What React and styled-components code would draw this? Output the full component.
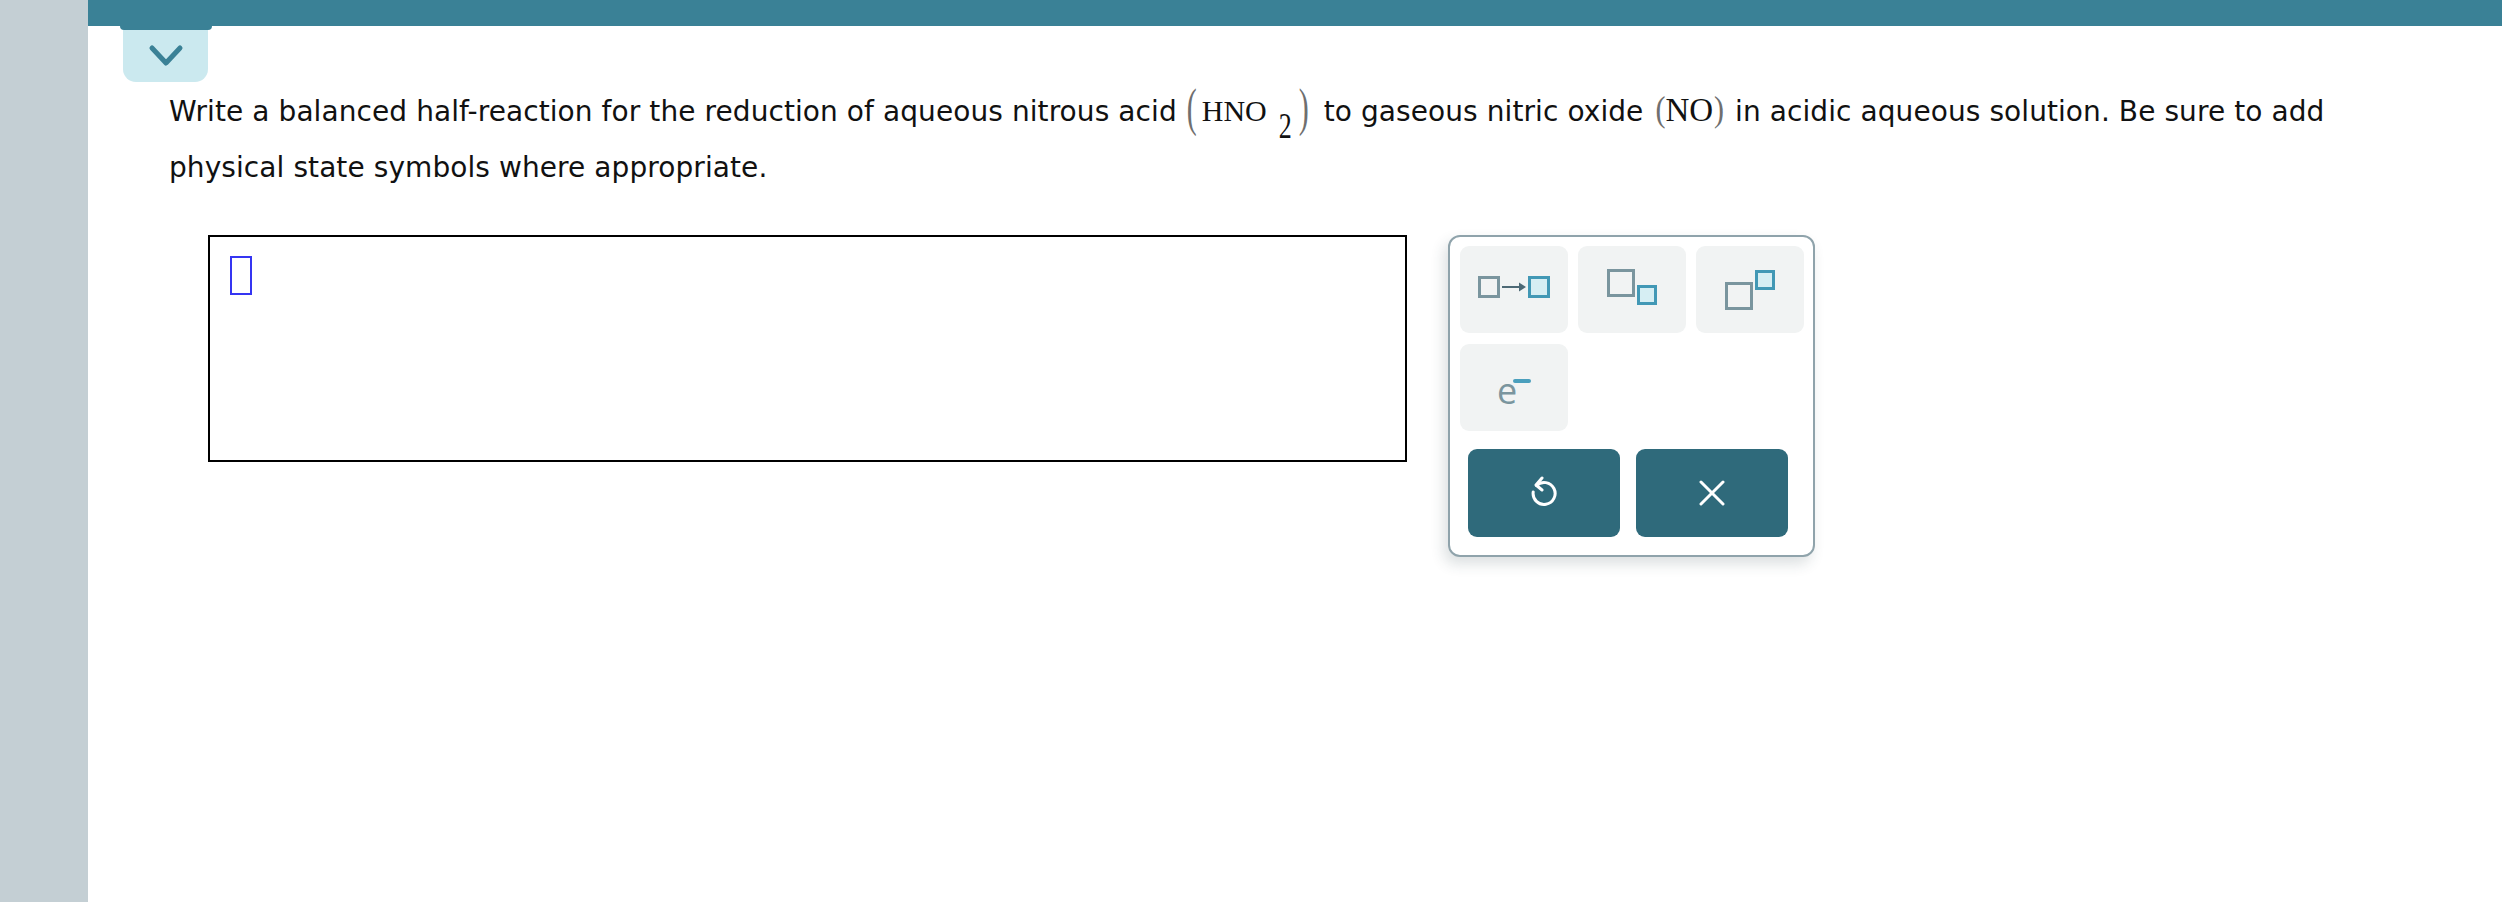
import React from 'react';
import styled, { createGlobalStyle } from 'styled-components';

const GlobalStyle = createGlobalStyle`
  html, body {
    margin: 0;
    padding: 0;
    background: #fff;
  }
  #root {
    height: 902px;
  }
`;

const Page = styled.div`
  display: flex;
  height: 902px;
  width: 2502px;
  overflow: hidden;
`;

const Sidebar = styled.div`
  flex: 0 0 88px;
  background: #c4cfd4;
`;

const Main = styled.div`
  flex: 1;
  display: flex;
  flex-direction: column;
`;

const TopBar = styled.div`
  height: 26px;
  background: #3a8196;
`;

const TabWrap = styled.div`
  width: 92px;
  margin-left: 32px;
  display: flex;
  flex-direction: column;
`;

const Lip = styled.div`
  height: 4px;
  background: #3a8196;
  border-radius: 0 0 5px 5px;
`;

const Tab = styled.div`
  width: 85px;
  height: 52px;
  margin-left: 3px;
  background: #cbe9ef;
  border-radius: 0 0 13px 13px;
  display: flex;
  align-items: center;
  justify-content: center;
`;

const Question = styled.p`
  margin: 2px 0 0 81px;
  max-width: 2230px;
  font-family: 'DejaVu Sans', Verdana, sans-serif;
  font-size: 28px;
  letter-spacing: 0.08px;
  line-height: 56px;
  color: #111;
`;

const Chem = styled.span`
  font-family: 'Liberation Serif', 'Times New Roman', serif;
  font-size: ${(p) => p.$size}px;
  letter-spacing: 0;
  color: #111;
  line-height: 0;
  white-space: nowrap;
  margin: 0 ${(p) => p.$right}px 0 ${(p) => p.$left}px;
`;

const Paren = styled.span`
  display: inline-block;
  font-family: 'Liberation Serif', serif;
  font-size: 30px;
  line-height: 0;
  color: #6f6f6f;
  transform: translateY(${(p) => p.$shift}px) scaleY(${(p) => p.$tall});
  margin: 0 ${(p) => p.$after || 0}px 0 ${(p) => p.$before || 0}px;
`;

const Sub = styled.span`
  display: inline-block;
  font-size: 26px;
  line-height: 0;
  margin-left: 12px;
  transform: translateY(14px) scaleY(1.35);
`;

const Workspace = styled.div`
  display: flex;
  align-items: flex-start;
  gap: 41px;
  margin: 39px 0 0 120px;
`;

const AnswerBox = styled.div`
  box-sizing: border-box;
  width: 1199px;
  height: 227px;
  border: 2px solid #000;
  padding: 19px 0 0 20px;
`;

const Cursor = styled.div`
  width: 22px;
  height: 39px;
  box-sizing: border-box;
  border: 2px solid #3535f2;
`;

const Palette = styled.div`
  width: 367px;
  height: 322px;
  box-sizing: border-box;
  border: 2px solid #8fa3ab;
  border-radius: 12px;
  background: #fff;
  box-shadow: -4px 7px 14px rgba(40, 60, 70, 0.16);
  padding: 9px 9px 17px 10px;
  display: flex;
  flex-direction: column;
`;

const KeyGrid = styled.div`
  display: grid;
  grid-template-columns: repeat(3, 108px);
  grid-auto-rows: 87px;
  column-gap: 10px;
  row-gap: 11px;
`;

const Key = styled.div`
  background: #f1f3f3;
  border-radius: 9px;
  display: flex;
  align-items: center;
  justify-content: center;
  padding-bottom: ${(p) => p.$lift || 0}px;
  box-sizing: border-box;
`;

const ActionRow = styled.div`
  display: flex;
  gap: 16px;
  margin: 18px 0 0 8px;
`;

const Action = styled.div`
  width: 152px;
  height: 88px;
  background: #2f6a7b;
  border-radius: 9px;
  display: flex;
  align-items: center;
  justify-content: center;
`;

const Electron = styled.span`
  position: relative;
  font-family: 'Open Sans', sans-serif;
  font-size: 36px;
  line-height: 1;
  color: #7a959e;
  padding-right: 14px;
  margin-top: 6px;
`;

const Minus = styled.span`
  position: absolute;
  right: 0;
  top: 6px;
  width: 18px;
  height: 4px;
  border-radius: 2px;
  background: #4a9fbd;
`;

const GRAY = '#7a959e';
const BLUE = '#4298b5';
const LIGHT = '#d6eef3';

const ArrowIcon = () => (
  <svg width="72" height="22" viewBox="0 0 72 22">
    <rect x="1.5" y="1.5" width="19" height="19" fill="none" stroke={GRAY} strokeWidth="3" />
    <line x1="24" y1="11" x2="43" y2="11" stroke="#4d6975" strokeWidth="2" />
    <polygon points="41,6.5 48,11 41,15.5" fill="#4d6975" />
    <rect x="51.5" y="1.5" width="19" height="19" fill={LIGHT} stroke={BLUE} strokeWidth="3" />
  </svg>
);

const SubIcon = () => (
  <svg width="50" height="36" viewBox="0 0 50 36">
    <rect x="1.5" y="1.5" width="25" height="25" fill="none" stroke={GRAY} strokeWidth="3" />
    <rect x="31.5" y="17.5" width="17" height="17" fill={LIGHT} stroke={BLUE} strokeWidth="3" />
  </svg>
);

const SupIcon = () => (
  <svg width="50" height="40" viewBox="0 0 50 40">
    <rect x="31.5" y="1.5" width="17" height="17" fill={LIGHT} stroke={BLUE} strokeWidth="3" />
    <rect x="1.5" y="13.5" width="25" height="25" fill="none" stroke={GRAY} strokeWidth="3" />
  </svg>
);

const UndoIcon = () => (
  <svg width="28" height="34" viewBox="0 0 28 34" fill="none" stroke="#fff" strokeWidth="3" strokeLinecap="round" strokeLinejoin="round">
    <path d="M12 2 L6 9 L12 14" />
    <path d="M6.5 9.5 A11 11 0 1 1 3.2 16" />
  </svg>
);

const CloseIcon = () => (
  <svg width="26" height="26" viewBox="0 0 26 26" stroke="#fff" strokeWidth="3" strokeLinecap="round">
    <line x1="2" y1="2" x2="24" y2="24" />
    <line x1="24" y1="2" x2="2" y2="24" />
  </svg>
);

const ChevronDown = () => (
  <svg width="36" height="24" viewBox="0 0 36 24" fill="none" stroke="#3a8196" strokeWidth="5" strokeLinecap="round" strokeLinejoin="round">
    <path d="M4 4 L18 19 L32 4" />
  </svg>
);

export default function App() {
  return (
    <>
      <GlobalStyle />
      <Page>
        <Sidebar />
        <Main>
          <TopBar />
          <TabWrap>
            <Lip />
            <Tab>
              <ChevronDown />
            </Tab>
          </TabWrap>
          <Question>
            Write a balanced half-reaction for the reduction of aqueous nitrous acid
            <Chem $size={30} $left={10} $right={15}>
              <Paren $tall={1.75} $shift={-4} $after={5}>(</Paren>HNO<Sub>2</Sub>
              <Paren $tall={1.75} $shift={-4} $before={7}>)</Paren>
            </Chem>
            to gaseous nitric oxide
            <Chem $size={33} $left={12} $right={11}>
              <Paren $tall={1.2} $shift={-2}>(</Paren>NO<Paren $tall={1.2} $shift={-2} $before={1}>)</Paren>
            </Chem>
            in acidic aqueous solution. Be sure to add physical state symbols where appropriate.
          </Question>
          <Workspace>
            <AnswerBox>
              <Cursor />
            </AnswerBox>
            <Palette>
              <KeyGrid>
                <Key $lift={6}><ArrowIcon /></Key>
                <Key $lift={6}><SubIcon /></Key>
                <Key><SupIcon /></Key>
                <Key>
                  <Electron>e<Minus /></Electron>
                </Key>
              </KeyGrid>
              <ActionRow>
                <Action><UndoIcon /></Action>
                <Action><CloseIcon /></Action>
              </ActionRow>
            </Palette>
          </Workspace>
        </Main>
      </Page>
    </>
  );
}
